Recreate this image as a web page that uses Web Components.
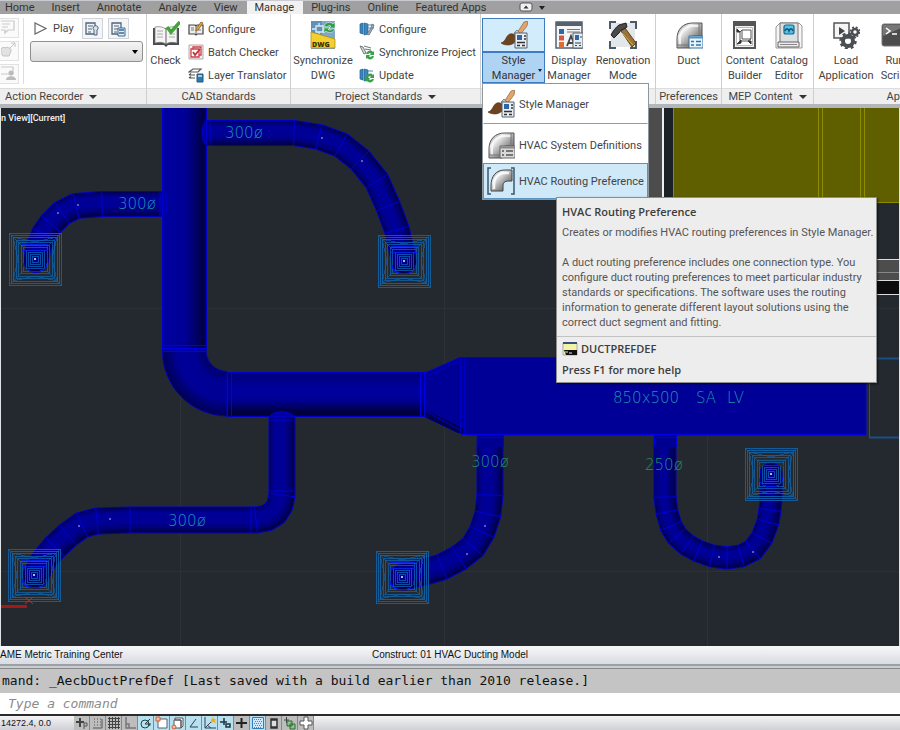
<!DOCTYPE html>
<html lang="en">
<head>
<meta charset="utf-8">
<title>HVAC Ducting Model</title>
<style>
  html, body { margin: 0; height: 100%; }
  body { font: 11px/15px Roboto, "Open Sans", sans-serif; color: #444; background: #fff; overflow: hidden; }
</style>
</head>
<body>
<cad-app></cad-app>
<script>
function define(name, html, setup) {
  const template = document.createElement('template');
  template.innerHTML = html;
  customElements.define(name, class extends HTMLElement {
    constructor() {
      super();
      this.attachShadow({ mode: 'open' });
    }
    connectedCallback() {
      if (this.shadowRoot.childNodes.length) return;
      this.shadowRoot.append(template.content.cloneNode(true));
      if (setup) setup(this, this.shadowRoot);
    }
  });
}

/* ---------- icons ---------- */
const duct = `<path d="M2 27V18C2 8 8 2 18 2h9v13h-7c-4 0-5 2-5 6v6z" fill="url(#m)" stroke="#555"/>
  <path d="M5 24v-6C5 10 10 5 18 5h6" fill="none" stroke="#fff" stroke-width="2" opacity=".7"/>
  <path d="M2 24h13M24 2v13" stroke="#777" fill="none"/>`;
const metal = `<defs><linearGradient id="m" x1="0" y1="0" x2="1" y2="1"><stop offset="0" stop-color="#777"/><stop offset=".3" stop-color="#eee"/><stop offset=".6" stop-color="#999"/><stop offset="1" stop-color="#444"/></linearGradient></defs>`;
const brush = `<path d="M17 12 24 1l4-1-1 5-7 9z" fill="#e3a36a" stroke="#8a6848" stroke-width=".7"/>
  <path d="m14 12 3-3 4 4-3 4z" fill="#c4c8cc" stroke="#666" stroke-width=".7"/>
  <path d="M1 22c5-1 5-8 9-9 4-1 7 2 6 6-2 6-11 6-15 3z" fill="#70431f" stroke="#4a2a12" stroke-width=".6"/>
  <path d="M15 12h12v15H15z" fill="#e9eef3" stroke="#56606c"/><path d="M17 14h5v5h-5z" fill="#2f66a5"/><path d="M24 15h2M24 18h2M17 21.500h8M17 24.500h3m2 0h3" stroke="#333" stroke-width="1.300"/>`;
const books = `<path d="m1 3 3-1v11l-3-1zM5 2l4 1v10l-4 1z" fill="#3b87bd" stroke="#1f5d8c" stroke-width=".7"/>`;
const sync = `<path d="M7 10a4 4 0 0 1 7-2l1-1v4h-4l1-1.500a2.500 2.500 0 0 0-3 .5zM15 12a4 4 0 0 1-7 2l-1 1v-4h4l-1 1.500a2.500 2.500 0 0 0 3-.5z" fill="#38a04b"/>`;
const icons = {
  style: [28, brush],
  ductSys: [28, metal + duct + `<path d="M13 15h15v12H13z" fill="#d9d9d9" stroke="#666"/><path d="M13 16.500h15" stroke="#888" stroke-width="2"/><path d="M15 20h2m2 0h7M15 24h2m2 0h7" stroke="#555" stroke-width="1.500"/>`],
  ductPref: [28, metal + duct + `<path d="M14 15h14v12H14z" fill="#eaf4fb" stroke="#3a6f9e"/><path d="M14 16.500h14" stroke="#4e94c8" stroke-width="2"/><path d="M16 20.500h3m2 0h5M16 24h3m2 0h5" stroke="#2f73ad" stroke-width="1.500"/>`],
  ductRoute: [28, metal + `<path d="M4 1H1v26h3M24 1h3v26h-3" fill="none" stroke="#3b5672" stroke-width="1.500"/><path d="M4 24v-5C4 9 9 3 18 3h7v11h-3c-5 0-6 2-6 6v4z" fill="url(#m)" stroke="#444"/><path d="M7 22v-3c0-8 4-13 11-13h4" fill="none" stroke="#fff" stroke-width="2.500" opacity=".8"/>`],
  display: [28, `<path d="M1 1h26v26H1z" fill="#f4f5f6" stroke="#56616d" stroke-width="1.500"/><path d="M1 3h26" stroke="#56616d" stroke-width="4"/><path d="M4 8h5v5H4z" fill="#2f66a5"/><path d="M4 14.500h5v5H4z" fill="#d6573c"/><path d="M4 21h5v5H4z" fill="#e06d2f"/><path d="M12 8.500h13M12 11h13" stroke="#777"/><path d="m12 25 4-10 4 10m-7-3h6" fill="none" stroke="#444" stroke-width="1.800"/><path d="M18 12h10v15H18z" fill="#e6edf3" stroke="#56616d"/><path d="M20 14h4v5h-4z" fill="#2f66a5"/><path d="M25 16h2M20 22h6M20 24.500h2m2 0h2" stroke="#345"/>`],
  renovation: [28, `<path d="M2 2h24v24H2z" fill="#e4e7ea"/><path d="M1 8V1h6M21 1h6v7M1 20v7h6M21 27h6v-7" fill="none" stroke="#4d5966" stroke-width="2"/><path d="m12 10 4-3 11 15-4 4z" fill="#9a7434" stroke="#5e421a"/><path d="m13 12 11 12" stroke="#d9b14a"/><path d="M2 14c2-4 5-8 8-10l7-2 1 4-3 2-3 1-2 3-5 5z" fill="#4a4a4a" stroke="#222"/>`],
  builder: [28, `<path d="M3 1h21v26H3z" fill="#f2f2f2" stroke="#555" stroke-width="2"/><path d="M3 3h21" stroke="#555" stroke-width="4"/><path d="M5.500 6.500h16v18h-16z" fill="#fff" stroke="#bbb"/><path d="M11 9h9v9h-9zM11 9l-2 2v9h8l3-2" fill="#fff" stroke="#555"/><path d="M6 8v3h3zM20 20h-3l3 3zM6 23l4-4v3z" fill="#333" stroke="#333"/>`],
  catalog: [28, `<path d="M5 2h19l3 3v22H1V6z" fill="#f6f6f6" stroke="#999"/><path d="M5 2h18v20H5z" fill="#dce0e3" stroke="#777"/><path d="M3 21h21v5H3z" fill="#ededed" stroke="#666"/><path d="M5 23.500h17" stroke="#888"/><rect x="9" y="4" width="10" height="9" rx="2" fill="#4fc5ea" stroke="#19648a" stroke-width="1.200"/><path d="M10 10c1-3 3-3 4 0 1-3 3-3 4 0" fill="none" stroke="#19506d" stroke-width="1.500"/>`],
  load: [28, `<path d="M2 2h15v15H2z" fill="#f5f5f5" stroke="#555" stroke-width="1.500"/><path d="m7 6 6 4-6 4z" fill="#444"/><circle cx="16" cy="20" r="5" fill="none" stroke="#4b4f54" stroke-width="4"/><circle cx="16" cy="20" r="7.500" fill="none" stroke="#4b4f54" stroke-width="2.500" stroke-dasharray="3 2.900"/><circle cx="23" cy="11" r="3" fill="none" stroke="#4b4f54" stroke-width="2.500"/><circle cx="23" cy="11" r="4.800" fill="none" stroke="#4b4f54" stroke-width="1.500" stroke-dasharray="2 1.800"/>`],
  script: [28, `<rect x="1" y="3" width="27" height="22" rx="2" fill="#4c4c4c" stroke="#777"/><path d="M2 15 27 4H2z" fill="#777"/><path d="m5 7 4 3-4 3M11 13h5" fill="none" stroke="#fff" stroke-width="1.500"/>`],
  check: [28, `<path d="M1 7h26v17H16l-2 2-2-2H1z" fill="#4a4d50"/><path d="M3 6c4-1 8 0 11 2v15c-3-2-7-2-11-1zM25 6c-4-1-8 0-11 2v15c3-2 7-2 11-1z" fill="#f5f5f5" stroke="#777" stroke-width=".7"/><path d="M5 10h6M5 13h6M5 16h6M17 13h6M17 16h6" stroke="#aaa"/><path d="m15 6 4 5L28 1" fill="none" stroke="#3fa535" stroke-width="3.500"/>`],
  dwg: [28, `<path d="M2 0h24v28H2z" fill="#7ea7c8"/><path d="M2 0h11v14H2z" fill="#5f92bb"/><path d="M7 5h7v6H7zM10 2v3M10 11v4M3 8h4" fill="none" stroke="#dceaf5" stroke-width="1.300"/><path d="m2 11 24 7v9H2z" fill="#f5cf2e" stroke="#a88610" stroke-width=".7"/><path d="M15 5a5.500 5.500 0 0 1 9-2l2-2v6h-6l2-2a3 3 0 0 0-4 1zM26 8a5.500 5.500 0 0 1-9 2l-2 2V7h6l-2 1.500a3 3 0 0 0 4-.5z" fill="#2f9c46" stroke="#fff" stroke-width=".5"/><text x="3" y="26" font-family="Open Sans" font-size="7" font-weight="800" fill="#3b3000">DWG</text>`],
  stdCfg: [16, `<path d="M1 4h6l1 1 1-1h6v9H9l-1 1-1-1H1z" fill="#eee" stroke="#444" stroke-width="1.200"/><path d="M8 5v8M3 7h3M3 9h3M10 9h3" stroke="#777"/><path d="m8 8 5-7 2 1-5 7-2 1z" fill="#e6a43d" stroke="#7a4e12" stroke-width=".7"/>`],
  batch: [16, `<path d="M1 1h14v14H1z" fill="#f6efef" stroke="#b9a7a7"/><path d="M3 5h8v8H3zM5 5V3h8v8h-2" fill="#fff" stroke="#c8414b" stroke-width="1.300"/><path d="m5 8 2 3 5-6" fill="none" stroke="#c8303c" stroke-width="1.800"/>`],
  layer: [16, `<path d="m1 5 4-3h8l-3 3zM1 8l2-1.500M1 8h6M1 11l2-1.500M1 11h6" fill="none" stroke="#555" stroke-width="1.200"/><path d="M9 7h6v8H9z" fill="#2e7cab" stroke="#1e587c"/><path d="M10 9h4" stroke="#cfe6f4" stroke-width="1.500"/>`],
  projCfg: [16, books + `<path d="m8 13 4-6 1-4 2 1-1 3-4 7z" fill="#9fb0bd" stroke="#5b6c7a" stroke-width=".8"/><path d="M8 4h5M9 7h6" stroke="#5b87ab"/>`],
  projSync: [16, `<path d="m1 2 3 1 3 6-2 1zM5 2l7 2M6 5l6 1" fill="#ddd" stroke="#6d7880" stroke-width="1"/>` + sync],
  projUpd: [16, books + sync + `<path d="M9 4h5" stroke="#5b87ab"/>`],
  play: [14, `<path d="M1 1v11l11-5.500z" fill="#fff" stroke="#666" stroke-width="1.200"/>`],
  rec1: [16, `<path d="M2 2h9v11H2z" fill="#eef2f6" stroke="#53657a" stroke-width="1.300"/><path d="M4 5h5M4 8h4M4 11h3" stroke="#53657a"/><path d="M10 14V9a2.500 2.500 0 1 1 4-1l-1 1v5z" fill="#d8e0e8" stroke="#53657a"/>`],
  rec2: [16, `<path d="M2 2h9v11H2z" fill="#eef2f6" stroke="#53657a" stroke-width="1.300"/><path d="M4 5h5M4 8h4M4 11h3" stroke="#53657a"/><path d="M8 7h7v8H8z" fill="#e4ecf4" stroke="#3a6a98"/><path d="M9 9h5M9 12h5" stroke="#3a6a98" stroke-width="1.500"/>`],
  note: [16, `<path d="M-3 2h16v9H7l-3 3v-3h-7zM1 5h8M1 8h6" fill="none" stroke="#c9c9c9" stroke-width="1.200"/>`],
  grab: [16, `<path d="M0 7c1-2 3-2 4-1 1-1 3-1 4 0 2 0 2 2 2 3l-2 5H2l-2-3z" fill="#e2e2e2" stroke="#c5c5c5"/><path d="m9 6 5-5M10 1h4v4" fill="none" stroke="#c5c5c5"/>`],
  user: [16, `<path d="M-2 2h14v7H-2z" fill="none" stroke="#c9c9c9" stroke-width="1.200"/><circle cx="10" cy="8" r="2.500" fill="#bbb"/><path d="M5 15c0-5 10-5 10 0z" fill="#bbb"/>`],
  cmd: [16, `<path d="M1 2h14v12H1z" fill="#f3f3a8" stroke="#aaa"/><path d="M1 2h14" stroke="#35507c" stroke-width="2"/><path d="M2 9h13v5H4z" fill="#111"/><path d="M3 11h3m1 1h3" stroke="#eee"/>`],
  eject: [14, `<rect x="1" y="2" width="12" height="8" rx="2" fill="#f0f0f0" stroke="#555"/><path d="m4.500 7.500 2.500-3 2.500 3z" fill="#333"/>`],
  s0: [14, `<path d="M1 6h8M5 2v9" stroke="#444" stroke-width="2"/><path d="M9 13V7h3v3H9" fill="none" stroke="#555"/>`],
  s1: [14, `<path d="M3 3h1m2 0h1m2 0h1M3 6h1m2 0h1m2 0h1M3 9h1m2 0h1m2 0h1M2 12h9V3" fill="none" stroke="#555"/>`],
  s2: [14, `<path d="M2.500 1v12M5.500 1v12M8.500 1v12M11.500 1v12M1 2.500h12M1 5.500h12M1 8.500h12M1 11.500h12" stroke="#444"/>`],
  s3: [14, `<path d="M3 1v11h10M3 8h3v4" fill="none" stroke="#777" stroke-width="1.500"/>`],
  s4: [14, `<circle cx="6" cy="8" r="4" fill="none" stroke="#244"/><path d="M6 8h6M6 8l5-5M9 6l2 4" stroke="#244" fill="none"/>`],
  s5: [14, `<path d="M3 3h9v9H3z" fill="#fff" stroke="#567"/><path d="M1 1h4v4H1z" fill="#f6c0a0" stroke="#d85a30"/>`],
  s6: [14, `<path d="M4 2h8v8l-2 2V4H4zM3 4h7v8H3z" fill="#fff" stroke="#555"/><circle cx="3" cy="11" r="2" fill="#f6c0a0" stroke="#d85a30"/>`],
  s7: [14, `<path d="m9 3-6 8h8" fill="none" stroke="#245"/>`],
  s8: [14, `<path d="M2 1v11h11M2 12l8-8M4 9l4 3" fill="none" stroke="#345"/><path d="m10 1 1 2h2l-1 2 1 2-3-1-2 1V4z" fill="#f0b01c"/>`],
  s9: [14, `<path d="M1 6h7M5 2v7M7 8h4v3H7z" stroke="#234" stroke-width="1.500" fill="none"/>`],
  s10: [14, `<path d="M1 7h11M6.500 2v10" stroke="#222" stroke-width="2"/>`],
  s11: [14, `<path d="M1.500 1.500h11v11h-11z" fill="#cfe6fb" stroke="#2f7fc0"/><path d="M3 3.500h8M3 7.500h8M3 11.500h8" stroke="#3a8ccb" stroke-dasharray="1 1"/><path d="M4 5.500h8M4 9.500h8" stroke="#3a8ccb" stroke-dasharray="1 1"/>`],
  s12: [14, `<path d="M4 3h6v9H4zM4 4h6M4 11h6" fill="#ddd" stroke="#333" stroke-width="1.500"/>`],
  s13: [14, `<path d="M1 4h5M3.500 1v6" stroke="#444"/><path d="M4 5h5v5H4zM7 8h5v5H7z" fill="#8cc48c" stroke="#2e6b33"/>`],
  s14: [14, `<path d="M5 1h4v4h4v4H9v4H5V9H1V5h4z" fill="#fff" stroke="#555"/>`]
};
define('ui-icon', `<style>:host{display:inline-block;flex:none;line-height:0}svg{display:block;overflow:hidden}</style>`, (el, root) => {
  const [size, body] = icons[el.getAttribute('name')];
  root.innerHTML += `<svg width="${size}" height="${size}" viewBox="0 0 ${size} ${size}" aria-hidden="true">${body}</svg>`;
});

/* ---------- ribbon ---------- */
define('ribbon-tabs', `
<style>
  :host { display: block; background: #a0a0a0; color: #333; }
  nav { display: flex; align-items: stretch; height: 14px; box-sizing: border-box; border-top: 1px solid #c8ccd0; }
  button { flex: none; border: 0; margin: 0; padding: 0 9px 0 8px; background: none; font: inherit; line-height: 12px; color: inherit; white-space: nowrap; }
  button:first-child { padding-left: 5px; }
  button[aria-selected=true] { background: #f1f1f1; }
  .fold { display: flex; align-items: center; gap: 6px; padding-left: 24px; }
  i { border: 3px solid transparent; border-top: 4px solid #222; border-bottom: 0; }
</style>
<nav role="tablist">
  <button role="tab">Home</button><button role="tab">Insert</button><button role="tab">Annotate</button><button role="tab">Analyze</button><button role="tab">View</button><button role="tab" aria-selected="true">Manage</button><button role="tab">Plug-ins</button><button role="tab">Online</button><button role="tab">Featured Apps</button>
  <button class="fold" aria-label="Minimize ribbon"><ui-icon name="eject"></ui-icon><i></i></button>
</nav>`);

define('ribbon-panel', `
<style>
  :host { display: flex; flex-direction: column; min-width: 0; border-right: 1px solid #cfcfcf; }
  .body { display: flex; flex: 1; min-height: 70px; padding-top: 4px; }
  footer { display: flex; justify-content: var(--title-align, center); align-items: center; gap: 6px; height: 16px; padding: 0 5px; background: #efefef; border-top: 1px solid #ddd; box-sizing: border-box; white-space: nowrap; min-width: var(--title-width, 0); }
  i { border: 4px solid transparent; border-top: 4px solid #333; border-bottom: 0; }
</style>
<div class="body"><slot></slot></div>
<footer><span></span></footer>`, (el, root) => {
  root.querySelector('span').textContent = el.getAttribute('label') || '';
  if (el.hasAttribute('more')) root.querySelector('footer').append(document.createElement('i'));
});

define('tool-button', `
<style>
  :host { display: block; flex: none; position: relative; width: var(--w, 44px); }
  button { display: block; width: 100%; border: 0; padding: 0; margin: 0; background: none; font: inherit; color: inherit; text-align: center; }
  .pic { display: flex; justify-content: center; align-items: center; height: 34px; }
  .text { display: flex; justify-content: center; height: 31px; padding-top: 1px; box-sizing: border-box; white-space: pre; }
  :host([open]) .pic { background: #d3ecfb; box-shadow: inset 0 0 0 1px #3d7cc0; }
  :host([open]) .text { background: #aed3f3; box-shadow: inset 0 0 0 1px #3d7cc0; position: relative; color: #333; }
  :host([open]) .text::after { content: ""; position: absolute; right: 3px; top: 17px; border: 2px solid transparent; border-top: 3px solid #222; border-bottom: 0; }
</style>
<button><span class="pic"></span><span class="text"></span></button><slot></slot>`, (el, root) => {
  const icon = document.createElement('ui-icon');
  icon.setAttribute('name', el.getAttribute('icon'));
  root.querySelector('.pic').append(icon);
  root.querySelector('.text').textContent = el.getAttribute('label').replace('|', '\n');
});

define('tool-row', `
<style>
  :host { display: block; }
  button { display: flex; align-items: center; gap: 4px; height: 22px; border: 0; padding: 0; background: none; font: inherit; color: inherit; white-space: nowrap; }
</style>
<button><slot name="icon"></slot><slot></slot></button>`);

define('style-menu', `
<style>
  :host { display: block; position: absolute; left: 0; top: 65px; width: 167px; box-sizing: border-box; background: #fff; border: 1px solid #8e979f; z-index: 5; }
  div { position: relative; }
  button { display: flex; align-items: center; gap: 4px; width: 100%; height: 36px; border: 1px solid transparent; padding: 0 3px; background: none; font: inherit; color: #444; white-space: nowrap; }
  .first { height: 40px; border-bottom: 1px solid #999; margin-bottom: 3px; }
  .on { background: #cfe9f8; border-color: #5a92c0; }
</style>
<button class="first"><ui-icon name="style"></ui-icon>Style Manager</button>
<button><ui-icon name="ductSys"></ui-icon>HVAC System Definitions</button>
<div><button class="on" aria-describedby="tip"><ui-icon name="ductRoute"></ui-icon>HVAC Routing Preference</button>
<help-tip id="tip"></help-tip></div>`);

define('help-tip', `
<style>
  :host { display: block; position: absolute; left: 73px; top: 34px; width: 321px; box-sizing: border-box; background: #ededed; border: 1px solid #8f8f8f; color: #555; box-shadow: 1px 1px 2px #0008; }
  section { padding: 6px 5px; }
  section + section { border-top: 1px solid #c2c2c2; padding: 4px 5px 5px; }
  p { margin: 0; }
  b { display: flex; align-items: center; gap: 3px; height: 15px; font: 600 11px/15px "Open Sans", sans-serif; color: #3c3c3c; }
  .lead { margin: 6px 0 15px; white-space: nowrap; }
  .help { margin-top: 6px; }
</style>
<section><b>HVAC Routing Preference</b>
<p class="lead">Creates or modifies HVAC routing preferences in Style Manager.</p>
<p>A duct routing preference includes one connection type. You configure duct routing preferences to meet particular industry standards or specifications. The software uses the routing information to generate different layout solutions using the correct duct segment and fitting.</p></section>
<section><b><ui-icon name="cmd"></ui-icon>DUCTPREFDEF</b><b class="help">Press F1 for more help</b></section>`);

define('action-recorder', `
<style>
  :host { display: flex; flex: 1; min-width: 0; }
  .side { display: grid; grid-auto-rows: 20px; gap: 3px; padding-right: 4px; border-right: 1px solid #ddd; height: 66px; }
  .side button { width: 19px; padding: 0 1px; border: 1px solid #e2e2e2; border-left: 0; background: #fafafa; overflow: hidden; }
  .main { flex: 1; min-width: 0; padding: 0 3px 0 6px; }
  .row { display: flex; align-items: center; gap: 5px; height: 21px; }
  button { font: inherit; color: inherit; border: 0; background: none; padding: 0; margin: 0; }
  .play { display: flex; align-items: center; gap: 5px; padding: 0 3px 0 4px; }
  .sq { display: grid; place-content: center; width: 21px; height: 21px; border: 1px solid #cfd4da; background: #f3f5f7; }
  label { display: block; position: relative; margin-top: 2px; }
  select { appearance: none; display: block; width: 100%; height: 21px; border: 1px solid #909090; border-radius: 3px; background: linear-gradient(#f4f4f4, #dadada); }
  label::after { content: ""; position: absolute; right: 5px; top: 9px; border: 3px solid transparent; border-top: 4px solid #000; border-bottom: 0; }
</style>
<div class="side"><button aria-label="Insert message"><ui-icon name="note"></ui-icon></button><button aria-label="Insert base point"><ui-icon name="grab"></ui-icon></button><button aria-label="Pause for user input"><ui-icon name="user"></ui-icon></button></div>
<div class="main"><div class="row"><button class="play"><ui-icon name="play"></ui-icon>Play</button><button class="sq" aria-label="Preference"><ui-icon name="rec1"></ui-icon></button><button class="sq" aria-label="Manage action macros"><ui-icon name="rec2"></ui-icon></button></div>
<label><select aria-label="Action macro"><option></option></select></label></div>`);

/* ---------- drawing ---------- */
define('duct-drawing', `
<style>
  :host { display: block; position: relative; background: #23292f; overflow: hidden; border: 0 solid #dfe3e6; border-width: 0 1px; }
  svg { position: absolute; inset: 0; width: 100%; height: 100%; }
  p { position: absolute; left: 0; top: 3px; margin: 0; font-size: 9px; font-weight: 500; color: #f2f2f2; white-space: nowrap; }
  text { font: 200 15px "DejaVu Sans Light", "DejaVu Sans", sans-serif; fill: #1c93ac; }
  .g { fill: #1f8f6a; }
</style>
<svg role="img" aria-label="HVAC duct layout"></svg><p>n View][Current]</p>`, (el, root) => {
  const line = (x1, y1, x2, y2, c = '#0000e6') => `<path d="M${x1} ${y1}L${x2} ${y2}" stroke="${c}"/>`;
  const pipe = (pts, w, joints) => {
    const d = 'M' + pts.map(p => p.join(' ')).join('L');
    const s = (width, colour, dx = 0, dy = 0) => `<path d="${d}" transform="translate(${dx} ${dy})" fill="none" stroke-linejoin="round" stroke-linecap="round" stroke="${colour}" stroke-width="${width}"/>`;
    let out = s(w, '#0000c4') + s(w - 2, '#00004c') + s(w - 5, '#00006a', -1, -1) + s(w - 9, '#000080', -2, -1) + s(w - 15, '#000096', -2, -2);
    for (const i of joints) {
      const a = pts[i - 1] || pts[i], b = pts[i + 1] || pts[i];
      const len = Math.hypot(b[0] - a[0], b[1] - a[1]);
      const nx = -(b[1] - a[1]) / len * w / 2, ny = (b[0] - a[0]) / len * w / 2;
      out += line(pts[i][0] - nx, pts[i][1] - ny, pts[i][0] + nx, pts[i][1] + ny, '#0000d2');
    }
    return out;
  };
  const diffuser = (x, y) => {
    let out = `<g fill="none" stroke="#1064ac" transform="translate(${x} ${y})" shape-rendering="crispEdges">`;
    for (const r of [26, 24, 22, 19, 17, 14, 12, 9, 7, 5, 3]) out += `<path d="M${-r} ${-r}H${r}V${r}H${-r}z" opacity="${r > 20 ? .85 : .75}"/>`;
    out += `<path d="M-26-26-12-12M26-26 12-12M-26 26-12 12M26 26 12 12M-22-22-17 0-22 22M22-22 17 0 22 22M-22-22 0-17 22-22M-22 22 0 17 22 22" opacity=".6"/>`;
    out += `<path d="M-13-9H13M-13-15H13M-12 4C-12 16 12 16 12 4" stroke="#0620e0"/></g><circle cx="${x}" cy="${y}" r="1" fill="#dff"/>`;
    return out;
  };
  const dots = [[322,138],[362,161],[78,205],[58,213],[110,519],[79,526],[485,526],[467,554],[719,557],[753,552]];
  const trunkStops = `<stop offset="0" stop-color="#000078"/><stop offset=".4" stop-color="#0000a0"/><stop offset=".65" stop-color="#000090"/><stop offset=".9" stop-color="#00003c"/><stop offset="1" stop-color="#000040"/>`;
  root.querySelector('svg').innerHTML = `
  <defs>
    <linearGradient id="v"><stop offset="0" stop-color="#0000a0"/><stop offset=".5" stop-color="#000096"/><stop offset=".8" stop-color="#000062"/><stop offset=".92" stop-color="#000040"/><stop offset="1" stop-color="#000070"/></linearGradient>
    <linearGradient id="h" x1="0" y1="0" x2="0" y2="1">${trunkStops}</linearGradient>
    <radialGradient id="b" gradientUnits="userSpaceOnUse" cx="227" cy="350" r="66"><stop offset=".32" stop-color="#000068"/><stop offset=".5" stop-color="#000094"/><stop offset=".75" stop-color="#000098"/><stop offset="1" stop-color="#000050"/></radialGradient>
  </defs>
  <g transform="translate(-1 -108)">
    <path d="M180.500 108v540M444.500 108v540M707.500 108v540M0 308.500h900M0 571.500h900" stroke="#2b3137"/>
    <path d="M649 108h13v95h-13z" fill="#4c4c4c"/><path d="M663 108v95" stroke="#eee" stroke-width="2"/><path d="M664 108h9v95h-9z" fill="#1c2127"/>
    <path d="M673 108h227v94H673z" fill="#5f5f00"/><path d="M673.500 108v94M818.500 108v94M822.500 108v94M860.500 108v94M864.500 108v94M673 202.500h227" stroke="#8c8c00"/>
    <path d="M870 259h30v21h-30z" fill="#4d4d4d"/><path d="M870 281h30v13h-30z" fill="#0c0c0c"/><path d="M870 259.500h30M870 280.500h30M870 294.500h30" stroke="#ddd"/><path d="M870 272.500h30" stroke="#888"/>
    <path d="M870 358.500h30M869 437.500h31" stroke="#1a4f86" stroke-width="2"/><path d="M869.500 358v80" stroke="#1b568f"/>
    ${pipe([[205,133],[210,133],[294,133],[319,137],[341,145],[360,160],[377,181],[388,206],[397,230],[404,261]], 26, [1,2,3,4,5,6,7,8])}
    ${pipe([[164,204],[160,204],[102,204],[76,206],[62,213],[51,224],[44,234],[39,246],[36,260]], 26, [1,2,3,4,5,6,7])}
    ${pipe([[282,416],[282,420],[282,491],[282,495],[280,505],[275,513],[267,518],[256,520],[251,520],[130,520],[97,521],[82,525],[68,535],[55,547],[44,560],[36,575]], 27, [1,2,3,7,8,9,10,11,12,13,14])}
    ${pipe([[490,440],[490,441],[490,495],[488,514],[482,532],[473,547],[459,558],[442,567],[425,572],[403,577]], 27, [2,3,4,5,6,7,8])}
    ${pipe([[665,440],[665,441],[665,497],[667,512],[671,526],[677,536],[687,545],[698,551],[712,556],[727,558],[741,556],[753,550],[762,538],[768,522],[770,510],[771,500],[771,474]], 23, [2,3,4,5,6,7,8,9,10,11,12,13,14,15])}
    <path d="M162.500 108h44v242h-44z" fill="url(#v)"/>
    <path d="M162.500 350h43.500a21 21 0 0 0 21 21.500V416A65 65 0 0 1 162.500 350z" fill="url(#b)" stroke="#0000c0"/>
    <path d="M227 372.500h198v44H227z" fill="url(#h)"/>
    <path d="M162.500 108v242M206.500 108v242M227 372.500h198M227 416.500h198" stroke="#0000cc"/>
    <path d="M163 345.500h43M163 348.500h43M163 351.500h43M227.500 372v44M231.500 372v44M420.500 373v44M424.500 373v44" stroke="#0000e0"/>
    <path d="M205 122c-4 5-4 17 0 22M164 194c4 5 4 15 0 20M269 417c5-7 21-7 26 0z" fill="#0000a0" stroke="#0000d0"/>
    <path d="M477 433h27v14h-27zM654 433h23v14h-23z" fill="#000090"/><path d="M477.500 433v14M503.500 433v14M654.500 433v14M676.500 433v14M477 437.500h27M654 437.500h23" stroke="#0000d0"/>
    <path d="M425 373 460 357.500h406v77.500H470l-10-1.500L425 417z" fill="#000096" stroke="#0000dc"/>
    <path d="m425 410 38 18v5h-5l-33-16z" fill="#00004e"/>
    <path d="M460.500 358v75M464.500 358v76M425 377l35-16M425 411l35 19" fill="none" stroke="#0000c4"/>
    <path d="M461 434.500h405" stroke="#0000e4"/>
    ${[[35,259],[404,261],[34,575],[402,577],[771,474]].map(p => diffuser(...p)).join('')}
    ${dots.map(p => `<circle cx="${p[0]}" cy="${p[1]}" r=".8" fill="#cfcfff"/>`).join('')}
    <path d="M0 606.500h27" stroke="#a31818" stroke-width="3"/><path d="m25 597 8 7m0-7-8 7" stroke="#a33"/>
    <text x="225" y="138">300ø</text><text x="118" y="209">300ø</text><text x="168" y="526">300ø</text>
    <text x="471" y="467" class="g">300ø</text><text x="645" y="470" class="g">250ø</text>
    <text x="613" y="403">850x500</text><text x="696" y="403">SA</text><text x="727" y="403">LV</text>
  </g>`;
});

/* ---------- bottom bars ---------- */
define('model-bar', `
<style>
  :host { display: grid; grid-template-columns: 1fr auto 1fr; align-items: center; height: 18px; background: linear-gradient(#f7f8fa, #d9dbe2); font: 10px/18px "Liberation Sans", sans-serif; color: #111; border-bottom: 2px solid #9ba0a6; overflow: hidden; white-space: nowrap; }
  span:first-child { text-indent: -4px; }
</style><span>AME Metric Training Center</span><span>Construct: 01 HVAC Ducting Model</span>`);

define('command-line', `
<style>
  :host { display: block; border-top: 2px solid #c9ccd0; font: 13px/24px "DejaVu Sans Mono", "Liberation Mono", monospace; color: #111; }
  output { display: block; height: 25px; padding-left: 2px; border-top: 1px solid #8a8a8a; box-sizing: border-box; background: #c4c4c4; white-space: nowrap; overflow: hidden; }
  input { display: block; width: 100%; height: 21px; box-sizing: border-box; border: 0; padding: 0 8px; background: #fff; font: inherit; line-height: 20px; font-style: italic; color: #333; }
  input::placeholder { color: #8c8c8c; opacity: 1; }
</style>
<output>mand: _AecbDuctPrefDef [Last saved with a build earlier than 2010 release.]</output>
<input placeholder="Type a command" aria-label="Command">`);

define('status-bar', `
<style>
  :host { display: flex; height: 16px; box-sizing: border-box; border-top: 2px solid #2b2b2b; background: linear-gradient(#f4f4f6, #cfd0d6); font: 9px/14px "Liberation Sans", sans-serif; color: #111; }
  span { flex: none; width: 74px; padding-left: 1px; box-sizing: border-box; }
  button { flex: none; width: 16px; height: 14px; border: 0; padding: 0; border-right: 1px solid #888; background: #bdbdbd; display: grid; place-content: center; overflow: hidden; }
  button[aria-pressed=true] { background: #b9e0ee; }
</style><span>14272.4, 0.0</span>`, (el, root) => {
  const names = ['Infer constraints', 'Snap mode', 'Grid display', 'Ortho mode', 'Polar tracking', 'Object snap', '3D object snap', 'Object snap tracking', 'Dynamic UCS', 'Dynamic input', 'Lineweight', 'Transparency', 'Quick properties', 'Selection cycling', 'Annotation monitor'];
  const on = [4, 5, 6, 7, 8, 9, 11];
  names.forEach((n, i) => {
    const b = document.createElement('button');
    b.setAttribute('aria-label', n);
    b.setAttribute('aria-pressed', on.includes(i));
    b.innerHTML = `<ui-icon name="s${i}"></ui-icon>`;
    root.append(b);
  });
});

/* ---------- application ---------- */
define('cad-app', `
<style>
  :host { display: flex; flex-direction: column; height: 100vh; overflow: hidden; }
  .ribbon { position: relative; z-index: 2; display: grid; grid-template-columns: 147fr 144fr 190fr 175fr 66fr 92fr 86fr; background: #fff; border-bottom: 4px solid #b3b6ba; }
  .list { display: grid; grid-auto-rows: 22px; gap: 1px; align-content: start; padding-left: 4px; }
  .recorder { --title-align: flex-start; }
  .last { overflow: hidden; --title-width: 206px; border-right: 0; }
  .lead { padding-left: 1px; }
  duct-drawing { flex: 1; min-height: 0; }
</style>
<ribbon-tabs></ribbon-tabs>
<div class="ribbon">
  <ribbon-panel class="recorder" label="Action Recorder" more><action-recorder></action-recorder></ribbon-panel>
  <ribbon-panel label="CAD Standards">
    <tool-button icon="check" label="Check" style="--w:37px"></tool-button>
    <div class="list"><tool-row><ui-icon slot="icon" name="stdCfg"></ui-icon>Configure</tool-row><tool-row><ui-icon slot="icon" name="batch"></ui-icon>Batch Checker</tool-row><tool-row><ui-icon slot="icon" name="layer"></ui-icon>Layer Translator</tool-row></div>
  </ribbon-panel>
  <ribbon-panel label="Project Standards" more>
    <tool-button icon="dwg" label="Synchronize|DWG" style="--w:64px"></tool-button>
    <div class="list"><tool-row><ui-icon slot="icon" name="projCfg"></ui-icon>Configure</tool-row><tool-row><ui-icon slot="icon" name="projSync"></ui-icon>Synchronize Project</tool-row><tool-row><ui-icon slot="icon" name="projUpd"></ui-icon>Update</tool-row></div>
  </ribbon-panel>
  <ribbon-panel>
    <span class="lead"></span>
    <tool-button icon="style" label="Style|Manager" style="--w:63px" open><style-menu></style-menu></tool-button>
    <tool-button icon="display" label="Display|Manager" style="--w:48px"></tool-button>
    <tool-button icon="renovation" label="Renovation|Mode" style="--w:60px"></tool-button>
  </ribbon-panel>
  <ribbon-panel label="Preferences"><tool-button icon="ductPref" label="Duct" style="--w:65px"></tool-button></ribbon-panel>
  <ribbon-panel label="MEP Content" more>
    <span class="lead"></span>
    <tool-button icon="builder" label="Content|Builder"></tool-button><tool-button icon="catalog" label="Catalog|Editor"></tool-button>
  </ribbon-panel>
  <ribbon-panel class="last" label="Applications">
    <tool-button icon="load" label="Load|Application" style="--w:64px"></tool-button><tool-button icon="script" label="Run|Script" style="--w:34px"></tool-button>
  </ribbon-panel>
</div>
<duct-drawing></duct-drawing>
<model-bar></model-bar>
<command-line></command-line>
<status-bar></status-bar>`);
</script>
</body>
</html>
